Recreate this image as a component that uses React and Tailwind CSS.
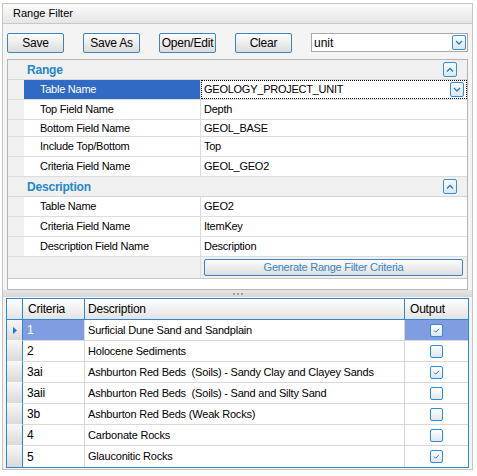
import React from "react";

const rangeRows = [
  { label: "Table Name", value: "GEOLOGY_PROJECT_UNIT", selected: true, h: "h-[20px]" },
  { label: "Top Field Name", value: "Depth", h: "h-[20px]" },
  { label: "Bottom Field Name", value: "GEOL_BASE", h: "h-[17px]" },
  { label: "Include Top/Bottom", value: "Top", h: "h-[20px]" },
  { label: "Criteria Field Name", value: "GEOL_GEO2", h: "h-[20px]" },
];

const descRows = [
  { label: "Table Name", value: "GEO2", h: "h-[20px]" },
  { label: "Criteria Field Name", value: "ItemKey", h: "h-[20px]" },
  { label: "Description Field Name", value: "Description", h: "h-[20px]" },
];

const criteria = [
  { code: "1", desc: "Surficial Dune Sand and Sandplain", out: true, selected: true },
  { code: "2", desc: "Holocene Sediments", out: false },
  { code: "3ai", desc: "Ashburton Red Beds  (Soils) - Sandy Clay and Clayey Sands", out: true },
  { code: "3aii", desc: "Ashburton Red Beds  (Soils) - Sand and Silty Sand", out: false },
  { code: "3b", desc: "Ashburton Red Beds (Weak Rocks)", out: false },
  { code: "4", desc: "Carbonate Rocks", out: false },
  { code: "5", desc: "Glauconitic Rocks", out: true },
];

const Chevron = ({ up }) => (
  <span className="flex h-[15px] w-[14px] items-center justify-center rounded-[2px] border border-[#3b8fd0] bg-gradient-to-b from-[#f7fbfe] to-[#d9e8f4]">
    <svg width="8" height="5" viewBox="0 0 8 5">
      <path d={up ? "M1 4.5 L4 1.5 L7 4.5" : "M1 1 L4 4 L7 1"} fill="none" stroke="#2a7fc4" strokeWidth="1.3" />
    </svg>
  </span>
);

const Check = ({ on }) => (
  <span className="flex h-[13px] w-[13px] items-center justify-center rounded-[2px] border border-[#2d8ed6] bg-gradient-to-b from-[#ffffff] to-[#dfe6ee]">
    {on && (
      <svg width="9" height="7" viewBox="0 0 9 7">
        <path d="M2 3.5 L3.7 5.2 L7 1.8" fill="none" stroke="#2a78c0" strokeWidth="1" />
      </svg>
    )}
  </span>
);

const ToolButton = ({ children }) => (
  <button className="flex h-[20px] w-[57px] items-center justify-center rounded-[2px] border border-[#3c84bf] bg-gradient-to-b from-[#fdfdfd] to-[#dcdcdc] text-[12px] tracking-[-0.2px] text-black">
    {children}
  </button>
);

const Category = ({ title }) => (
  <div className="flex h-[20px] items-center justify-between border-b border-[#d6d6d6] bg-[#f0f0f0] pl-[19px] pr-[10px]">
    <span className="text-[12px] font-bold tracking-[-0.2px] text-[#1f87c9]">{title}</span>
    <Chevron up />
  </div>
);

const PropRow = ({ row }) => (
  <div className={`flex ${row.h} border-b border-[#dcdcdc]`}>
    <div className="w-[16px] shrink-0 bg-[#f0f0f0]" />
    <div className={`flex w-[177px] shrink-0 items-center border-r border-[#dcdcdc] pl-[16px] ${row.selected ? "bg-[#316ac5] text-white" : "bg-white text-black"}`}>
      {row.label}
    </div>
    {row.selected ? (
      <div className="flex flex-1 items-center justify-between border border-dotted border-black bg-white pl-[2px] pr-[2px]">
        <span>{row.value}</span>
        <Chevron />
      </div>
    ) : (
      <div className="flex flex-1 items-center bg-white pl-[3px]">{row.value}</div>
    )}
  </div>
);

export default function App() {
  return (
    <div className="h-[476px] w-[477px] bg-white pl-[2px] pt-[3px] text-[11px] text-black" style={{ fontFamily: '"Liberation Sans", Arial, sans-serif' }}>
      <div className="flex h-[467px] w-[471px] flex-col border border-[#c4c4c4] bg-[#f4f4f4]">
        <div className="flex h-[20px] shrink-0 items-center border-b border-[#c8c8c8] bg-gradient-to-b from-[#fbfbfb] to-[#e6e6e6] pl-[10px] text-[11px]">
          Range Filter
        </div>

        <div className="flex h-[35px] shrink-0 items-center gap-[19px] pl-[4px] pt-[2px]">
          <ToolButton>Save</ToolButton>
          <ToolButton>Save As</ToolButton>
          <ToolButton>Open/Edit</ToolButton>
          <ToolButton>Clear</ToolButton>
          <div className="flex h-[19px] w-[157px] items-center justify-between border border-[#a9a9a9] bg-white pl-[2px] pr-[1px]">
            <span className="text-[12px]">unit</span>
            <Chevron />
          </div>
        </div>

        <div className="ml-[4px] flex h-[231px] w-[461px] shrink-0 flex-col border border-[#b4b4b4] bg-white tracking-[-0.25px]">
          <div className="flex flex-col border-b border-[#c8c8c8]">
            <Category title="Range" />
            {rangeRows.map((r) => (
              <PropRow key={r.label + r.value} row={r} />
            ))}
            <Category title="Description" />
            {descRows.map((r) => (
              <PropRow key={r.label + r.value} row={r} />
            ))}
            <div className="flex h-[21px] bg-[#f0f0f0]">
              <div className="w-[193px] shrink-0 border-r border-[#dcdcdc]" />
              <div className="flex flex-1 items-center pl-[3px] pr-[4px]">
                <button className="h-[17px] w-full rounded-[2px] border border-[#3c84bf] bg-gradient-to-b from-[#fdfdfd] to-[#dedede] text-[11px] leading-none text-[#3d84c0]">
                  Generate Range Filter Criteria
                </button>
              </div>
            </div>
          </div>
        </div>

        <div className="flex h-[7px] shrink-0 items-center justify-center gap-[1px] bg-gradient-to-b from-[#e6e6e6] to-[#d6d6d6]">
          <span className="h-[2px] w-[2px] bg-[#a0a0a0]" />
          <span className="ml-[1px] h-[2px] w-[2px] bg-[#a0a0a0]" />
          <span className="ml-[1px] h-[2px] w-[2px] bg-[#a0a0a0]" />
        </div>

        <div className="ml-[3px] mt-[1px] w-[463px] border border-[#2e88cf] bg-white text-[11px] tracking-[-0.2px]">
          <div className="flex h-[21px] border-b border-[#2e88cf] bg-gradient-to-b from-[#ffffff] to-[#e3e3e3] text-[12px]">
            <div className="w-[16px] shrink-0 border-r border-[#2e88cf]" />
            <div className="flex w-[62px] shrink-0 items-center border-r border-[#2e88cf] pl-[5px]">Criteria</div>
            <div className="flex w-[320px] shrink-0 items-center border-r border-[#2e88cf] pl-[3px]">Description</div>
            <div className="flex flex-1 items-center pl-[5px]">Output</div>
          </div>
          {criteria.map((c, i) => (
            <div key={c.code} className={`flex h-[21px] ${i < criteria.length - 1 ? "border-b border-[#d8d8d8]" : ""}`}>
              <div className={`flex w-[16px] shrink-0 items-center justify-center border-r border-[#2e88cf] bg-gradient-to-b from-[#f6f6f6] to-[#dadada] ${i < criteria.length - 1 ? "-mb-px border-b border-b-[#f8f8f8]" : ""}`}>
                {c.selected && (
                  <svg width="4" height="7" viewBox="0 0 4 7">
                    <path d="M0 0 L4 3.5 L0 7 Z" fill="#1f77c8" />
                  </svg>
                )}
              </div>
              <div className={`flex w-[62px] shrink-0 items-center border-r border-[#d8d8d8] pl-[4px] text-[12px] ${c.selected ? "bg-[#7f9de0] text-white" : ""}`}>
                {c.code}
              </div>
              <div className="flex w-[320px] shrink-0 items-center whitespace-pre border-r border-[#d8d8d8] pl-[3px] text-[11px]">{c.desc}</div>
              <div className={`flex flex-1 items-center justify-center ${c.selected ? "bg-[#7f9de0]" : ""}`}>
                <Check on={c.out} />
              </div>
            </div>
          ))}
        </div>
      </div>
    </div>
  );
}
